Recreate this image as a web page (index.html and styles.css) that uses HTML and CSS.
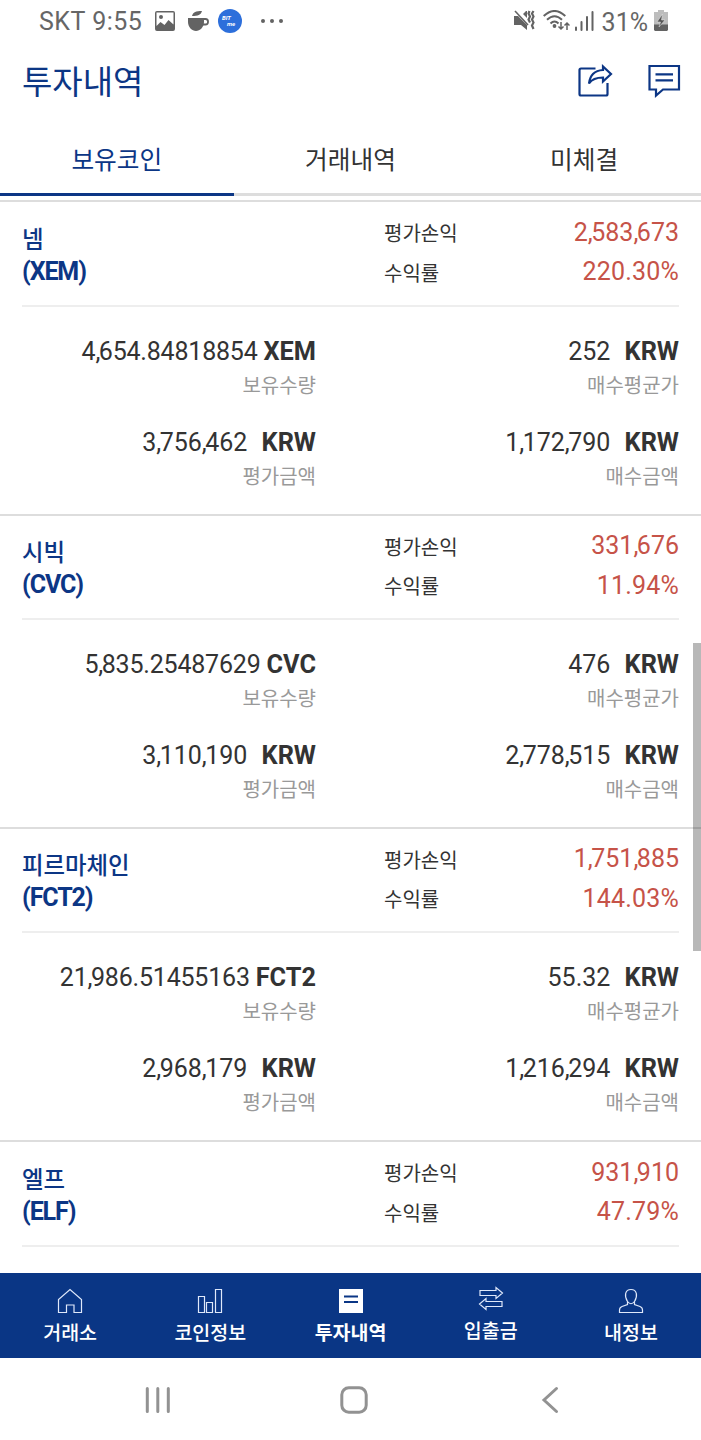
FILE: index.html
```html
<!DOCTYPE html>
<html lang="ko">
<head>
	<meta charset="UTF-8">
	<title>투자내역</title>
	<link rel="stylesheet" href="styles.css">
</head>
<body>
<div class="wrapper">
	<!-- 상태바 -->
	<div class="status">
		<div class="status-left">
			<span class="carrier">SKT 9:55</span>
			<svg class="ico-photo" width="20" height="20" viewBox="0 0 20 20">
				<path fill="#636363" fill-rule="evenodd" d="M2 0h16a2 2 0 0 1 2 2v16a2 2 0 0 1-2 2H2a2 2 0 0 1-2-2V2a2 2 0 0 1 2-2zM1.500 1.500v13.500l4-4 4 3 4-5 5 4.500V1.500zM6 4a2 2 0 1 1 0 4a2 2 0 0 1 0-4z"/>
			</svg>
			<svg class="ico-cup" width="21" height="20" viewBox="0 0 21 20">
				<path fill="#636363" d="M4 5C5 1 8 0 14 0C13 4 10 5 4 5zM0 7h16v4c0 5-4 9-8 9s-8-4-8-9z"/>
				<path fill="none" stroke="#636363" stroke-width="1.8" d="M15 8h2.500a2.500 2.700 0 0 1 0 5.500H14"/>
			</svg>
			<span class="bit"><i>BIT</i><i class="bit2">me</i></span>
			<span class="dots"><b></b><b></b><b></b></span>
		</div>
		<div class="status-right">
			<svg width="21" height="21" viewBox="0 0 21 21">
				<path fill="#636363" d="M0 6h4l9 9v5l-6-5H0zM9 4l3-3h1v7z"/>
				<path fill="none" stroke="#636363" stroke-width="1.600" d="M1 1l13 14"/>
				<path fill="none" stroke="#636363" stroke-width="2.200" d="M15.500 1l-1 2.500 1.500 3-1.500 3 1.500 3M19.500 1l-1.500 2.500 1.500 3-1.500 3 1.500 3-1.500 3 1.500 3.500"/>
			</svg>
			<svg class="ico-wifi" width="27" height="21" viewBox="0 0 27 21">
				<path fill="none" stroke="#636363" stroke-width="2" d="M.7 6Q11.500-4 22.300 6M4 9.800Q11.500 2.800 19 9.800M7.500 13.500Q11.500 9.500 15.500 13.500"/>
				<circle cx="11.500" cy="16" r="1.900" fill="#636363"/>
				<path fill="none" stroke="#636363" stroke-width="1.500" d="M18 12v7M15.500 16.500l2.500 2.500 2.500-2.500M24 20v-7M21.500 15.500l2.500-2.500 2.500 2.500"/>
			</svg>
			<svg class="ico-signal" width="19" height="20" viewBox="0 0 19 20">
				<path fill="none" stroke="#636363" stroke-width="2" stroke-linecap="round" d="M1 16.500V19M6.500 11v8M12 6v13M17.500 1v18"/>
			</svg>
			<span class="percent">31%</span>
			<svg class="ico-battery" width="14" height="21" viewBox="0 0 14 21">
				<path fill="#bdbdbd" d="M4 0h6v2h4v13H0V2h4z"/>
				<path fill="#636363" d="M0 14.500h14V20l-1 1H1l-1-1z"/>
				<path fill="#555" stroke="#e8e8e8" stroke-width=".5" d="M8.500 4L3 12h3.500L5 17l6-7H7.500z"/>
			</svg>
		</div>
	</div>

	<!-- 헤더 -->
	<div class="header">
		<h1>투자내역</h1>
		<div class="header-btns">
			<svg width="35" height="34" viewBox="0 0 35 34">
				<path fill="none" stroke="#0c3685" stroke-width="2.200" d="M17.500 4.500H3Q1.500 4.500 1.500 6V30Q1.500 31.500 3 31.500H28Q29.500 31.500 29.500 30V19"/>
				<path fill="none" stroke="#0c3685" stroke-width="2.200" d="M11 19.500C12 10.500 17 6.500 25 6V2.500L33 10 25 17.500V13.500C18 13.500 14 15 11 19.500z"/>
			</svg>
			<svg width="33" height="34" viewBox="0 0 33 34">
				<path fill="none" stroke="#0c3685" stroke-width="2.200" d="M1.500 2H31V25.500H15L8 31.500V25.500H1.500z"/>
				<path fill="none" stroke="#0c3685" stroke-width="2.200" d="M7.500 10.300H25M7.500 16.300H25"/>
			</svg>
		</div>
	</div>

	<!-- 탭 -->
	<div class="tabs">
		<div class="tab on">보유코인</div>
		<div class="tab">거래내역</div>
		<div class="tab">미체결</div>
	</div>

	<!-- 보유코인 목록 -->
	<div class="list">
		<div class="coin">
			<div class="coin-top">
				<div class="name">넴<br><span>(XEM)</span></div>
				<div class="label">평가손익<br>수익률</div>
				<div class="profit">2<i>,</i>583<i>,</i>673<br><span>220.30%</span></div>
			</div>
			<div class="coin-info">
				<div class="cell amount"><p>4<i>,</i>654.84818854 <b>XEM</b></p><em>보유수량</em></div>
				<div class="cell"><p>252 <b class="krw">KRW</b></p><em>매수평균가</em></div>
				<div class="cell"><p>3<i>,</i>756<i>,</i>462 <b class="krw">KRW</b></p><em>평가금액</em></div>
				<div class="cell"><p>1<i>,</i>172<i>,</i>790 <b class="krw">KRW</b></p><em>매수금액</em></div>
			</div>
		</div>
		<div class="coin">
			<div class="coin-top">
				<div class="name">시빅<br><span>(CVC)</span></div>
				<div class="label">평가손익<br>수익률</div>
				<div class="profit">331<i>,</i>676<br><span>11.94%</span></div>
			</div>
			<div class="coin-info">
				<div class="cell amount"><p>5<i>,</i>835.25487629 <b>CVC</b></p><em>보유수량</em></div>
				<div class="cell"><p>476 <b class="krw">KRW</b></p><em>매수평균가</em></div>
				<div class="cell"><p>3<i>,</i>110<i>,</i>190 <b class="krw">KRW</b></p><em>평가금액</em></div>
				<div class="cell"><p>2<i>,</i>778<i>,</i>515 <b class="krw">KRW</b></p><em>매수금액</em></div>
			</div>
		</div>
		<div class="coin">
			<div class="coin-top">
				<div class="name">피르마체인<br><span>(FCT2)</span></div>
				<div class="label">평가손익<br>수익률</div>
				<div class="profit">1<i>,</i>751<i>,</i>885<br><span>144.03%</span></div>
			</div>
			<div class="coin-info">
				<div class="cell amount"><p>21<i>,</i>986.51455163 <b>FCT2</b></p><em>보유수량</em></div>
				<div class="cell"><p>55.32 <b class="krw">KRW</b></p><em>매수평균가</em></div>
				<div class="cell"><p>2<i>,</i>968<i>,</i>179 <b class="krw">KRW</b></p><em>평가금액</em></div>
				<div class="cell"><p>1<i>,</i>216<i>,</i>294 <b class="krw">KRW</b></p><em>매수금액</em></div>
			</div>
		</div>
		<div class="coin">
			<div class="coin-top">
				<div class="name">엘프<br><span>(ELF)</span></div>
				<div class="label">평가손익<br>수익률</div>
				<div class="profit">931<i>,</i>910<br><span>47.79%</span></div>
			</div>
		</div>
		<div class="scrollbar"></div>
	</div>

	<!-- 하단 메뉴 -->
	<div class="menu">
		<div class="item">
			<svg width="26" height="26" viewBox="0 0 26 26"><path d="M1.500 24.500V11.500L13 1.500 24.500 11.500V24.500H17V17H9.500V24.500z"/></svg>
			<span>거래소</span>
		</div>
		<div class="item">
			<svg width="26" height="26" viewBox="0 0 26 26"><path d="M1.500 8.500h6v16h-6zM9.500 14.500h6v10h-6zM18.500 1.500h6v23h-6z"/></svg>
			<span>코인정보</span>
		</div>
		<div class="item on">
			<svg width="26" height="26" viewBox="0 0 26 26"><path class="fill" d="M1 1h24v24H1z"/><path class="dark" d="M6 8.500h14M6 14h14"/></svg>
			<span>투자내역</span>
		</div>
		<div class="item up">
			<svg width="26" height="26" viewBox="0 0 26 26"><path d="M2 4.500H18V1.500L24.500 7 18 12.500V9.500H2zM24 15.500H8V12.500L1.500 18 8 23.500V20.500H24z"/></svg>
			<span>입출금</span>
		</div>
		<div class="item">
			<svg width="26" height="26" viewBox="0 0 26 26"><path d="M9.500 13.500C6 8 7 1.500 13 1.500S20 8 16.500 13.500V16.500L22 18.500Q24.500 19.500 24.500 22V24.500H1.500V22Q1.500 19.500 4 18.500L9.500 16.500zM9.500 13.500Q13 18 16.500 13.500"/></svg>
			<span>내정보</span>
		</div>
	</div>

	<!-- 네비게이션 바 -->
	<div class="nav">
		<svg width="26" height="28" viewBox="0 0 26 28"><path d="M2.300 2.500v23M12.800 2.500v23M23.300 2.500v23"/></svg>
		<svg class="home" width="28" height="28" viewBox="0 0 28 28"><rect x="1.800" y="1.800" width="24.400" height="24.400" rx="7"/></svg>
		<svg width="18" height="28" viewBox="0 0 18 28"><path d="M15.500 2.500L3 14l12.500 11.500"/></svg>
	</div>
</div>
</body>
</html>
```
FILE: styles.css
```css
* {
	margin: 0;
	padding: 0;
	box-sizing: border-box;
}
body {
	background-color: #fff;
	color: #333;
	font-family: Roboto, "Noto Sans CJK KR", sans-serif;
}
svg {
	display: block;
	flex-shrink: 0;
}
.wrapper {
	width: 701px;
	height: 1440px;
	display: flex;
	flex-direction: column;
	overflow: hidden;
}

/* 상태바 */
.status {
	height: 41px;
	padding: 0 33px 0 39px;
	display: flex;
	justify-content: space-between;
	color: #666;
	font-size: 25px;
}
.status-left,
.status-right {
	display: flex;
	align-items: center;
}
.carrier {
	width: 116px;
	line-height: 42px;
	padding-top: 2px;
	letter-spacing: .5px;
	white-space: nowrap;
}
.ico-cup {
	margin-left: 13px;
}
.bit {
	width: 24px;
	height: 24px;
	margin-left: 9px;
	padding: 6px 0 0 4px;
	border-radius: 50%;
	background-color: #2d6fdb;
	color: #fff;
	font-size: 6px;
	font-weight: bold;
	line-height: 6px;
}
.bit i {
	display: block;
}
.bit .bit2 {
	padding-left: 5px;
}
.dots {
	display: flex;
	gap: 5px;
	margin-left: 19px;
}
.dots b {
	width: 4px;
	height: 4px;
	border-radius: 50%;
	background-color: #636363;
}
.ico-wifi {
	margin-left: 8px;
}
.ico-signal {
	margin-left: 5px;
}
.percent {
	margin-left: 8px;
	padding-top: 3px;
}
.ico-battery {
	margin-left: 6px;
}

/* 헤더 */
.header {
	height: 82px;
	padding: 0 20px 0 22px;
	display: flex;
	justify-content: space-between;
	align-items: center;
}
.header h1 {
	padding-top: 2px;
	color: #0c3685;
	font-size: 33px;
	font-weight: 400;
	line-height: 48px;
}
.header-btns {
	padding-bottom: 3px;
	display: flex;
	gap: 35px;
}

/* 탭 */
.tabs {
	height: 73px;
	display: flex;
}
.tab {
	flex: 1;
	border-bottom: 3px solid #ddd;
	font-size: 24.700px;
	line-height: 75px;
	text-align: center;
}
.tab.on {
	border-color: #0c3685;
	color: #0c3685;
}

/* 목록 */
.list {
	height: 1077px;
	padding-top: 4.300px;
	position: relative;
	overflow: hidden;
}
.coin {
	height: 313.300px;
	padding: 0 22px;
	border-top: 2px solid #ddd;
}
.coin-top {
	height: 104.600px;
	padding-top: 10.500px;
	border-bottom: 2px solid #eee;
	display: flex;
}
.name {
	width: 362px;
	padding-top: 12px;
	color: #0c3685;
	font-size: 23.400px;
	font-weight: 500;
	line-height: 31px;
}
.name span {
	font-size: 25px;
	font-weight: bold;
	letter-spacing: -1.100px;
}
.label {
	flex: 1;
	padding-top: 2.500px;
	font-size: 20px;
	line-height: 39.500px;
}
.profit {
	color: #c65348;
	font-size: 25px;
	line-height: 39.500px;
	text-align: right;
}
.profit span {
	letter-spacing: .2px;
}
/* 콤마 간격 */
.profit i,
.cell i {
	font-style: normal;
	letter-spacing: -1.500px;
}
.coin-info {
	padding-top: 27px;
	display: grid;
	grid-template-columns: 294px 363px;
	row-gap: 21px;
}
.cell {
	text-align: right;
}
.cell p {
	font-size: 25px;
	line-height: 36px;
}
.amount p {
	letter-spacing: -.200px;
}
.cell b {
	font-size: 25.300px;
	letter-spacing: 0;
}
.cell em {
	display: block;
	margin-top: -1px;
	color: #999;
	font-size: 20px;
	font-style: normal;
	line-height: 35px;
}
.cell .krw {
	margin-left: 8px;
}
.scrollbar {
	width: 8px;
	height: 308px;
	position: absolute;
	top: 447px;
	right: 0;
	background-color: rgba(0, 0, 0, .28);
}

/* 하단 메뉴 */
.menu {
	height: 85px;
	background-color: #0a3685;
	display: flex;
}
.item {
	flex: 1;
	padding-top: 15px;
	display: flex;
	flex-direction: column;
	align-items: center;
	color: #fff;
	font-size: 19.500px;
	font-weight: 500;
	line-height: 39px;
}
.item.on {
	font-weight: bold;
}
.item.up {
	padding-top: 13px;
}
.item svg {
	fill: none;
	stroke: #dfe8fa;
	stroke-width: 1.200;
}
.item .fill {
	fill: #fff;
	stroke: none;
}
.item .dark {
	stroke: #0a3685;
	stroke-width: 2;
}

/* 네비게이션 바 */
.nav {
	height: 82px;
	padding: 2px 142px 0 145px;
	display: flex;
	justify-content: space-between;
	align-items: center;
}
.nav svg {
	fill: none;
	stroke: #929292;
	stroke-width: 3;
	stroke-linecap: round;
}
.nav .home {
	margin-right: 5px;
}
```
